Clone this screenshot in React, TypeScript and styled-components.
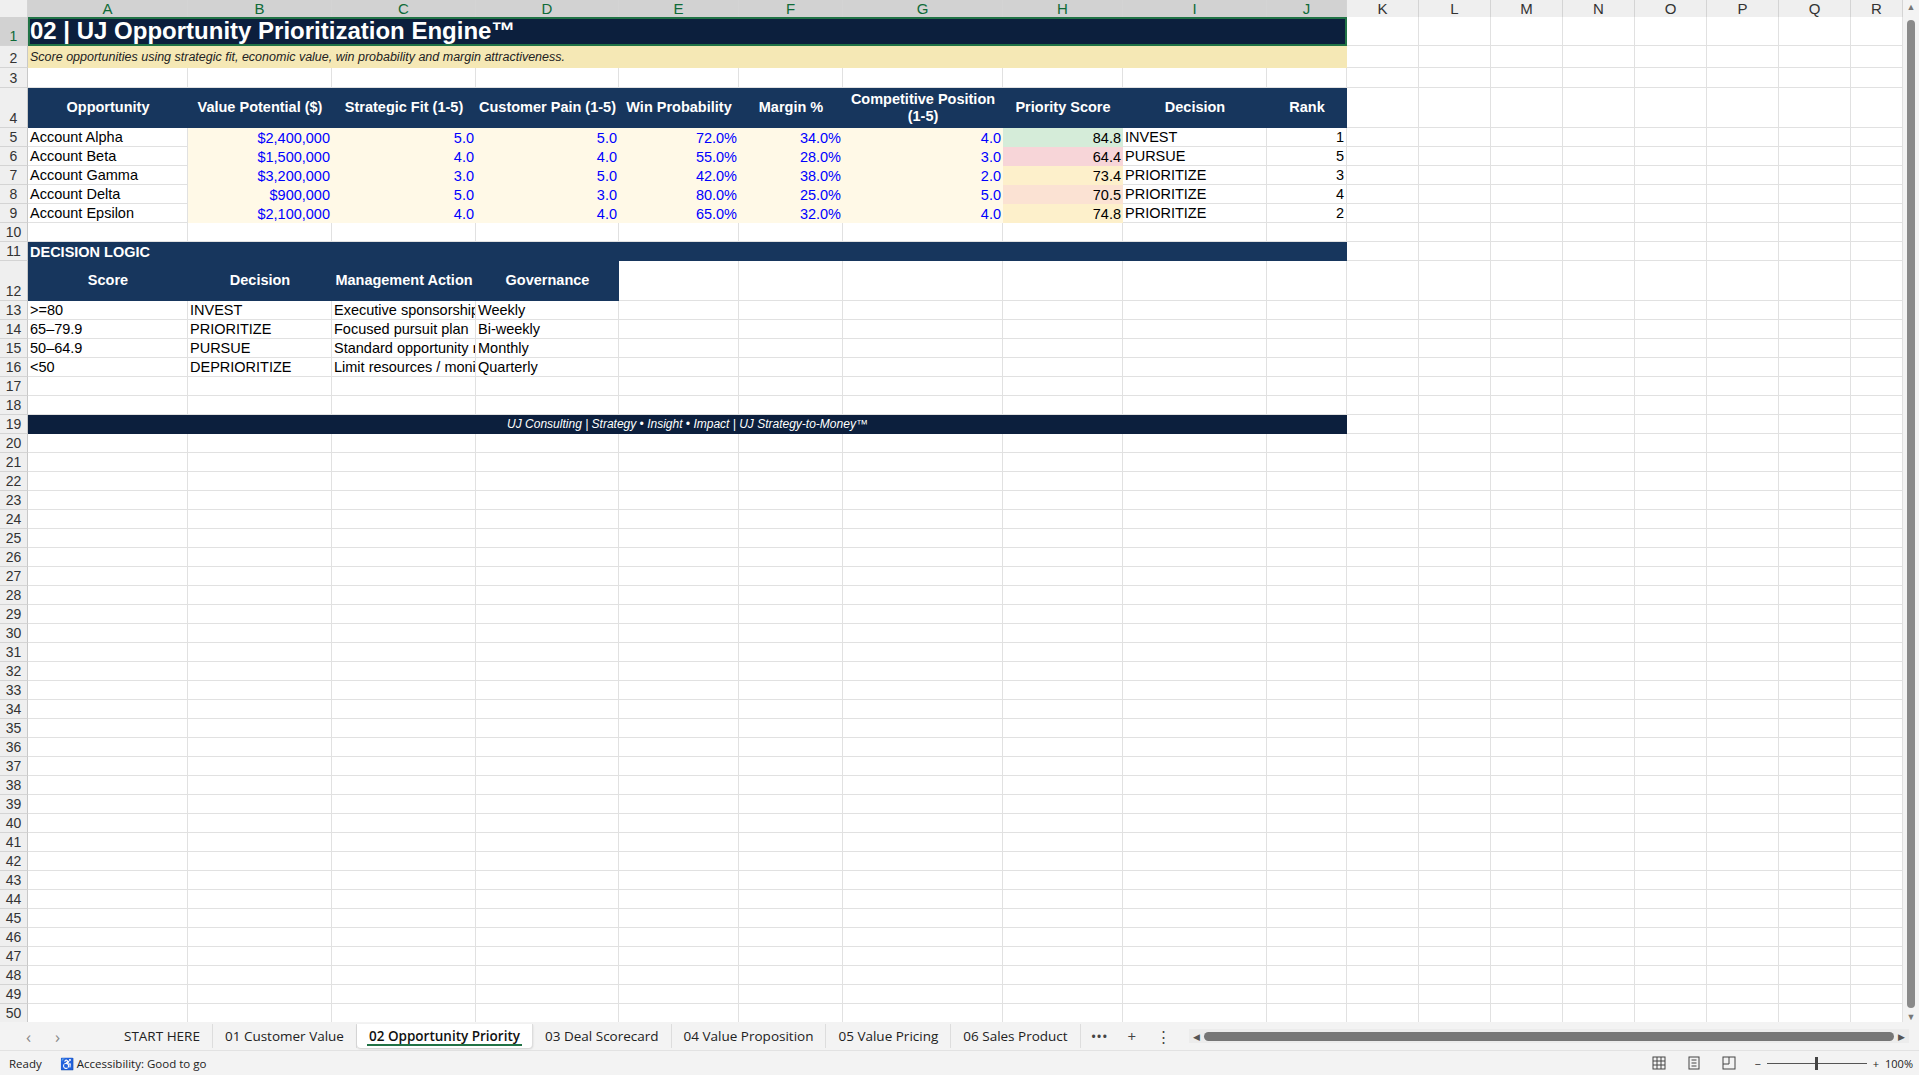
import React from "react";
import styled, { createGlobalStyle, css } from "styled-components";

const Global = createGlobalStyle`
  html, body { margin: 0; padding: 0; overflow: hidden; background: #fff; }
  body { font-family: "Liberation Sans", Arial, sans-serif; }
`;

const COLS = "28px 160px 144px 144px 143px 120px 104px 160px 120px 144px 80px repeat(7, 72px) 1fr";
const LETTERS = ["A","B","C","D","E","F","G","H","I","J","K","L","M","N","O","P","Q","R"];

const Page = styled.div`
  width: 1919px; height: 1075px; display: flex; flex-direction: column; overflow: hidden;
`;
const Main = styled.div`display: flex; flex: 1; min-height: 0;`;
const Grid = styled.div`flex: 1; display: flex; flex-direction: column; overflow: hidden;`;
const VScroll = styled.div`
  width: 16px; background: #f3f3f3; display: flex; flex-direction: column; align-items: center;
  padding-top: 2px; box-sizing: border-box; gap: 2px;
`;
const VThumb = styled.div`width: 8px; height: 1000px; background: #8a8a8a; border-radius: 4px; margin-top: 6px;`;
const Arrow = styled.div`font-size: 9px; color: #777; line-height: 10px;`;

const Row = styled.div<{ $h: number }>`
  display: grid; grid-template-columns: ${COLS}; height: ${p => p.$h}px; flex: none;
`;
const ColHead = styled.div<{ $sel?: boolean }>`
  background: ${p => (p.$sel ? "#d2d2d2" : "#efefef")}; color: ${p => (p.$sel ? "#0f6b38" : "#333")};
  border-right: 1px solid #d4d4d4; border-bottom: 1px solid ${p => (p.$sel ? "#217346" : "#d4d4d4")};
  font-size: 15px; display: flex; align-items: center; justify-content: center; box-sizing: border-box;
`;
const RowHead = styled.div<{ $sel?: boolean }>`
  background: ${p => (p.$sel ? "#d2d2d2" : "#efefef")}; color: ${p => (p.$sel ? "#0f6b38" : "#333")};
  border-right: 1px solid #c8c8c8; border-bottom: 1px solid #d4d4d4; box-sizing: border-box;
  font-size: 14px; display: flex; align-items: flex-end; justify-content: center; padding-bottom: 1px;
`;
type CellP = {
  $bg?: string; $c?: string; $al?: "left" | "right" | "center"; $b?: boolean; $i?: boolean;
  $span?: number; $fs?: number; $wrap?: boolean; $va?: "end" | "center"; $sel?: boolean;
};
const Cell = styled.div<CellP>`
  grid-column: span ${p => p.$span || 1};
  background: ${p => p.$bg || "#fff"};
  color: ${p => p.$c || "#000"};
  font-size: ${p => p.$fs || 14.5}px;
  font-weight: ${p => (p.$b ? 700 : 400)};
  font-style: ${p => (p.$i ? "italic" : "normal")};
  box-sizing: border-box; padding: 0 2px; overflow: hidden; white-space: ${p => (p.$wrap ? "normal" : "nowrap")};
  display: flex; align-items: ${p => (p.$va === "center" ? "center" : "flex-end")};
  justify-content: ${p => (p.$al === "right" ? "flex-end" : p.$al === "center" ? "center" : "flex-start")};
  text-align: ${p => p.$al || "left"}; line-height: 1.2;
  ${p => (p.$bg
    ? css`border: none;`
    : css`border-right: 1px solid #e1e1e1; border-bottom: 1px solid #e1e1e1;`)}
  ${p => p.$sel && css`outline: 2px solid #217346; outline-offset: -2px;`}
`;

const TabBar = styled.div`
  height: 28px; background: #f3f3f3; display: flex; align-items: center; font-size: 14px; color: #222; flex: none;
  font-family: "Open Sans", "Liberation Sans", sans-serif;
`;
const Nav = styled.div`width: 112px; display: flex; gap: 24px; padding-left: 26px; color: #888; font-size: 17px; box-sizing: border-box;`;
const Tab = styled.div<{ $active?: boolean }>`
  padding: 0 12px; height: 24px; display: flex; align-items: center; border-right: 1px solid #ddd; position: relative;
  font-size: 13.5px;
  ${p => p.$active && css`
    background: #fff; color: #111; font-weight: 600; border-radius: 0 0 4px 4px; box-shadow: 0 1px 2px rgba(0,0,0,.15);
    &:after { content: ""; position: absolute; left: 10px; right: 10px; bottom: 2px; height: 2px; background: #217346; }
  `}
`;
const Tool = styled.div`padding: 0 10px; color: #444; font-size: 15px;`;
const HScroll = styled.div`
  flex: 1; margin: 0 10px 0 8px; height: 14px; background: #ececec; display: flex; align-items: center; gap: 4px; padding: 0 4px;
  color: #555; font-size: 9px;
`;
const HThumb = styled.div`flex: 1; height: 9px; border-radius: 5px; background: #767676;`;
const Status = styled.div`
  height: 25px; background: #f3f3f3; border-top: 1px solid #e2e2e2; display: flex; align-items: center; font-size: 11.5px; color: #222;
  padding-left: 9px; gap: 18px; font-family: "Open Sans", "Liberation Sans", sans-serif; flex: none; box-sizing: border-box;
`;
const Spacer = styled.div`flex: 1;`;
const ViewIcons = styled.div`display: flex; align-items: center; gap: 22px; color: #444;`;
const Zoom = styled.div`display: flex; align-items: center; gap: 6px; padding-right: 6px; font-size: 11px;`;
const ZTrack = styled.div`width: 100px; height: 1px; background: #555; position: relative;`;
const ZKnob = styled.div`position: absolute; left: 48px; top: -6px; width: 3px; height: 13px; background: #444;`;

const NAVY = "#17365d";
const DARK = "#0c1f3d";
const CREAM = "#fff9e7";
const BLUE = "#0000ff";

function Empty({ n }: { n: number }) {
  return <>{Array.from({ length: n }).map((_, i) => <Cell key={i} />)}</>;
}

const opps = [
  ["Account Alpha", "$2,400,000", "5.0", "5.0", "72.0%", "34.0%", "4.0", "84.8", "INVEST", "1", "#d5ecd9"],
  ["Account Beta", "$1,500,000", "4.0", "4.0", "55.0%", "28.0%", "3.0", "64.4", "PURSUE", "5", "#f7d5d8"],
  ["Account Gamma", "$3,200,000", "3.0", "5.0", "42.0%", "38.0%", "2.0", "73.4", "PRIORITIZE", "3", "#fdf0cb"],
  ["Account Delta", "$900,000", "5.0", "3.0", "80.0%", "25.0%", "5.0", "70.5", "PRIORITIZE", "4", "#fbe2d3"],
  ["Account Epsilon", "$2,100,000", "4.0", "4.0", "65.0%", "32.0%", "4.0", "74.8", "PRIORITIZE", "2", "#fdf0cb"],
];
const logic = [
  [">=80", "INVEST", "Executive sponsorship", "Weekly"],
  ["65–79.9", "PRIORITIZE", "Focused pursuit plan", "Bi-weekly"],
  ["50–64.9", "PURSUE", "Standard opportunity review", "Monthly"],
  ["<50", "DEPRIORITIZE", "Limit resources / monitor", "Quarterly"],
];
const heads = ["Opportunity", "Value Potential ($)", "Strategic Fit (1-5)", "Customer Pain (1-5)", "Win Probability", "Margin %", "Competitive Position (1-5)", "Priority Score", "Decision", "Rank"];

export default function App() {
  const rows: React.ReactNode[] = [];
  const R = (n: number, h: number, children: React.ReactNode) =>
    rows.push(<Row key={n} $h={h}><RowHead $sel={n === 1}>{n}</RowHead>{children}</Row>);

  R(1, 29, <><Cell $span={10} $bg={DARK} $c="#fff" $b $fs={24} $sel $va="center">02 | UJ Opportunity Prioritization Engine™</Cell><Empty n={8} /></>);
  R(2, 22, <><Cell $span={10} $bg="#f5e8b5" $i $fs={12.5} $c="#222" $va="center">Score opportunities using strategic fit, economic value, win probability and margin attractiveness.</Cell><Empty n={8} /></>);
  R(3, 20, <Empty n={18} />);
  R(4, 40, <>{heads.map(h => <Cell key={h} $bg={NAVY} $c="#fff" $b $al="center" $va="center" $wrap $fs={14.5}>{h}</Cell>)}<Empty n={8} /></>);
  opps.forEach((o, i) => R(5 + i, 19, <>
    <Cell>{o[0]}</Cell>
    {o.slice(1, 7).map((v, j) => <Cell key={j} $bg={CREAM} $c={BLUE} $al="right">{v}</Cell>)}
    <Cell $bg={o[10]} $al="right">{o[7]}</Cell>
    <Cell>{o[8]}</Cell>
    <Cell $al="right">{o[9]}</Cell>
    <Empty n={8} />
  </>));
  R(10, 19, <Empty n={18} />);
  R(11, 19, <><Cell $span={10} $bg={NAVY} $c="#fff" $b>DECISION LOGIC</Cell><Empty n={8} /></>);
  R(12, 40, <>{["Score", "Decision", "Management Action", "Governance"].map(h => <Cell key={h} $bg={NAVY} $c="#fff" $b $al="center" $va="center">{h}</Cell>)}<Empty n={14} /></>);
  logic.forEach((l, i) => R(13 + i, 19, <>{l.map((v, j) => <Cell key={j}>{v}</Cell>)}<Empty n={14} /></>));
  R(17, 19, <Empty n={18} />);
  R(18, 19, <Empty n={18} />);
  R(19, 19, <><Cell $span={10} $bg={DARK} $c="#fff" $i $al="center" $fs={12} $va="center">UJ Consulting | Strategy • Insight • Impact | UJ Strategy-to-Money™</Cell><Empty n={8} /></>);
  for (let n = 20; n <= 50; n++) R(n, 19, <Empty n={18} />);

  return (
    <Page>
      <Global />
      <Main>
        <Grid>
          <Row $h={17}>
            <ColHead />
            {LETTERS.map((l, i) => <ColHead key={l} $sel={i < 10}>{l}</ColHead>)}
          </Row>
          {rows}
        </Grid>
        <VScroll><Arrow>▲</Arrow><VThumb /><Spacer /><Arrow>▼</Arrow></VScroll>
      </Main>
      <TabBar>
        <Nav><span>‹</span><span>›</span></Nav>
        {["START HERE", "01 Customer Value", "02 Opportunity Priority", "03 Deal Scorecard", "04 Value Proposition", "05 Value Pricing", "06 Sales Product"].map(t =>
          <Tab key={t} $active={t.startsWith("02")}>{t}</Tab>)}
        <Tool>•••</Tool><Tool>+</Tool><Tool>⋮</Tool>
        <HScroll><span>◀</span><HThumb /><span>▶</span></HScroll>
      </TabBar>
      <Status>
        <span>Ready</span>
        <span>♿ Accessibility: Good to go</span>
        <Spacer />
        <ViewIcons>
          <svg width="14" height="14" viewBox="0 0 14 14" fill="none" stroke="#444"><rect x="1" y="1" width="12" height="12" /><path d="M1 5h12M1 9h12M5 1v12M9 1v12" /></svg>
          <svg width="12" height="14" viewBox="0 0 12 14" fill="none" stroke="#444"><rect x="1" y="1" width="10" height="12" /><path d="M3.5 4h5M3.5 7h5M3.5 10h5" /></svg>
          <svg width="14" height="14" viewBox="0 0 14 14" fill="none" stroke="#444"><rect x="1" y="1" width="12" height="12" /><path d="M7 1v7H1" /></svg>
        </ViewIcons>
        <Zoom><span>−</span><ZTrack><ZKnob /></ZTrack><span>+</span><span>100%</span></Zoom>
      </Status>
    </Page>
  );
}
